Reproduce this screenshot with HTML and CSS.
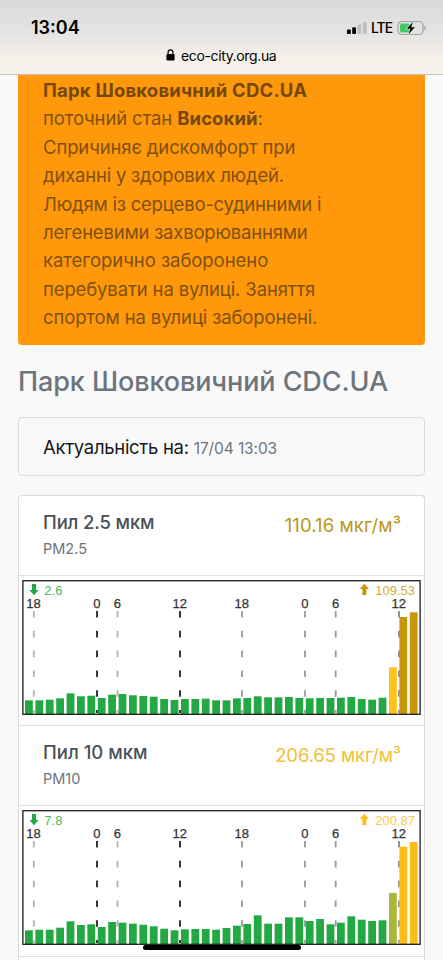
FILE: index.html
```html
<!DOCTYPE html>
<html lang="uk">
<head>
<meta charset="utf-8">
<title>Парк Шовковичний CDC.UA</title>
<link rel="stylesheet" href="styles.css">
</head>
<body>
<header class="browser-bar">
  <div class="status">
    <span class="clock">13:04</span>
    <div class="indicators">
      <svg class="signal" width="20" height="14" viewBox="0 0 20 14">
        <rect x="0" y="8.5" width="3.8" height="4.5" rx="1" fill="#000"/>
        <rect x="5.2" y="6.2" width="3.8" height="6.8" rx="1" fill="#000"/>
        <rect x="10.6" y="3.6" width="3.6" height="9.4" rx="1" fill="#bdbdbd"/>
        <rect x="16" y="1" width="3.6" height="12" rx="1" fill="#bdbdbd"/>
      </svg>
      <span class="network">LTE</span>
      <svg class="battery" width="30" height="16" viewBox="0 0 30 16">
        <rect x="1" y="1.5" width="25" height="13" rx="4" fill="none" stroke="#a2a2a2" stroke-width="1.2"/>
        <path d="M27.4 5.8q1.6.6 1.6 2.2t-1.6 2.2z" fill="#a2a2a2"/>
        <rect x="3" y="3.5" width="10" height="9" rx="2" fill="#3ecb63"/>
        <path d="M15.8 2 9.8 8.8h3.5L11.6 14.2 17.8 7.2h-3.6z" fill="#000" stroke="#dedede" stroke-width="1.6" paint-order="stroke"/>
      </svg>
    </div>
  </div>
  <div class="address">
    <svg width="9" height="12" viewBox="0 0 9 12">
      <rect x="0.4" y="5" width="8.2" height="6.6" rx="1" fill="#000"/>
      <path d="M2.1 5.5V3.3a2.4 2.4 0 0 1 4.8 0v2.2" fill="none" stroke="#000" stroke-width="1.2"/>
    </svg>
    <span>eco-city.org.ua</span>
  </div>
</header>
<main class="page">
  <section class="alert">
    <b class="place">Парк Шовковичний CDC.UA</b><br>
    <span>поточний стан <b>Високий</b>:</span><br>
    <span>Спричиняє дискомфорт при</span><br>
    <span class="tight">диханні у здорових людей.</span><br>
    <span class="tight">Людям із серцево-судинними і</span><br>
    <span class="tight">легеневими захворюваннями</span><br>
    <span class="loose">категорично заборонено</span><br>
    <span>перебувати на вулиці. Заняття</span><br>
    <span>спортом на вулиці заборонені.</span>
  </section>
  <h1 class="title">Парк Шовковичний CDC.UA</h1>
  <section class="updated">
    <span class="updated-label">Актуальність на:</span>
    <span class="updated-time">17/04 13:03</span>
  </section>
  <section class="readings">
    <div class="reading">
      <div>
        <div class="name">Пил 2.5 мкм</div>
        <div class="code">PM2.5</div>
      </div>
      <div class="value value-high">110.16 мкг/м³</div>
    </div>
    <div class="chart" id="pm25"></div>
    <div class="reading">
      <div>
        <div class="name name-pm10">Пил 10 мкм</div>
        <div class="code">PM10</div>
      </div>
      <div class="value value-mid">206.65 мкг/м³</div>
    </div>
    <div class="chart chart-second" id="pm10"></div>
  </section>
</main>
<div class="home-indicator"></div>
<script src="charts.js"></script>
</body>
</html>
```
FILE: styles.css
```css
* { box-sizing: border-box; }
body {
  margin: 0;
  background: #f9f9fa;
  font-family: Inter, "Liberation Sans", sans-serif;
  color: #212529;
}
.browser-bar {
  height: 75px;
  padding-top: 17px;
  background: linear-gradient(#d9dada, #e4e4e3 45%, #f7f1e9 80%, #f6f2ed);
  border-bottom: 1px solid #c9c3bc;
  color: #000;
}
.status {
  display: flex;
  justify-content: space-between;
  align-items: center;
  height: 21px;
  padding: 0 16px 0 31px;
}
.clock { font-size: 18px; font-weight: 600; letter-spacing: 0; }
.indicators { display: flex; align-items: center; }
.network { margin: 0 4px 0 4px; font-size: 14px; font-weight: 500; letter-spacing: -1.1px; padding-right: 1px; }
.address {
  display: flex;
  align-items: center;
  gap: 6px;
  height: 20px;
  margin: 7px 0 0 166px;
  font-size: 14px;
  letter-spacing: -0.36px;
}
.page { padding: 0 18px; }
.alert {
  height: 270px;
  padding: 1px 24px 0 25px;
  border-radius: 0 0 4px 4px;
  background: #ff980b;
  color: #80500d;
  font-size: 18.5px;
  line-height: 28.4px;
  letter-spacing: -0.13px;
  white-space: nowrap;
}
.alert b { font-weight: 700; color: #754807; letter-spacing: 0.1px; }
.alert .place { letter-spacing: 0.2px; }
.alert .tight { letter-spacing: -0.21px; }
.alert .loose { letter-spacing: -0.05px; }
.title {
  margin: 20px 0 0;
  font-size: 27px;
  line-height: 34px;
  font-weight: 500;
  letter-spacing: -0.09px;
  color: #6c757d;
  white-space: nowrap;
}
.updated {
  display: flex;
  align-items: center;
  gap: 5px;
  height: 59px;
  margin-top: 18px;
  padding: 1px 24px 0;
  border: 1px solid #d9dadb;
  border-radius: 4px;
}
.updated-label { font-size: 18.5px; letter-spacing: -0.3px; color: #17191b; }
.updated-time { font-size: 15.5px; letter-spacing: -0.1px; color: #6c757d; padding-top: 2px; }
.readings {
  height: 465px;
  margin-top: 19px;
  border: 1px solid #d9dadb;
  border-bottom: 0;
  border-radius: 4px 4px 0 0;
  background: #fff;
}
.reading {
  display: flex;
  justify-content: space-between;
  height: 80px;
  padding: 13px 23px 0 24px;
  border-bottom: 1px solid #dedfe0;
}
.name { font-size: 18.5px; line-height: 26px; font-weight: 500; letter-spacing: -0.15px; color: #495057; }
.name-pm10 { letter-spacing: 0; }
.code { margin-top: 3px; font-size: 14.5px; line-height: 22px; color: #6c757d; }
.value { padding-top: 3px; font-size: 18.5px; line-height: 26px; }
.value-high { color: #ba9618; letter-spacing: 0.1px; }
.value-mid { color: #f0c136; letter-spacing: -0.13px; }
.chart {
  height: 150px;
  padding: 4px 0 0 3px;
  border-bottom: 1px solid #dedfe0;
}
.chart-second { height: 151px; }
.chart svg { display: block; }
.chart text { font-family: "Liberation Sans", Arial, sans-serif; font-size: 13px; }
.home-indicator {
  position: absolute;
  left: 143px;
  top: 945px;
  width: 158px;
  height: 5px;
  border-radius: 3px;
  background: #000;
}
```
FILE: charts.js
```js
const GREEN = "#24a843";
const AMBER = "#ffc21a";
const BRONZE = "#c8960c";
const OLIVE = "#a9b83c";

const ticks = [
  [11.8, "18", "#b3b3b3"], [75, "0", "#222"], [95.5, "6", "#b3b3b3"], [158, "12", "#222"],
  [220, "18", "#999"], [283, "0", "#999"], [313.7, "6", "#999"], [377, "12", "#888"]
];

function drawChart(id, low, high, highColor, heights, colors) {
  let out = "";
  for (const [x, , color] of ticks) {
    out += `<line x1="${x}" x2="${x}" y1="31" y2="133" stroke="${color}" stroke-width="1.8" stroke-dasharray="6.6 13.2"/>`;
  }
  heights.forEach((h, i) => {
    const color = colors[i - 35] || GREEN;
    out += `<rect x="${(3 + i * 10.4).toFixed(1)}" y="${(134 - h).toFixed(1)}" width="7.8" height="${h}" fill="${color}"/>`;
  });
  for (const [x, label] of ticks) {
    out += `<text x="${x - 0.2}" y="28" text-anchor="middle" fill="#333" stroke="#333" stroke-width="0.25">${label}</text>`;
  }
  out += `<path d="M10 4h4v6h2.6L12 15.3 7.4 10H10z" fill="${GREEN}"/>`;
  out += `<text x="22.3" y="14.7" fill="#4bb765">${low}</text>`;
  out += `<path d="M340.4 15h4V9h2.6L342.4 3.7 337.8 9h2.6z" fill="${highColor}"/>`;
  out += `<text x="393" y="14.7" text-anchor="end" fill="${highColor}" opacity="0.8">${high}</text>`;
  out += `<rect x="0.9" y="0.7" width="397.2" height="133.6" fill="none" stroke="#1c1c1c" stroke-width="1.3"/>`;
  document.getElementById(id).innerHTML =
    `<svg width="399" height="135" viewBox="0 0 399 135">${out}</svg>`;
}

drawChart("pm25", "2.6", "109.53", BRONZE,
  [13.7, 13.7, 14.3, 15.7, 20.7, 17.7, 18.3, 16, 19.3, 20, 18.7, 18, 17.3, 15, 14, 15, 15, 15.3, 13.7,
   13.7, 15.7, 16, 17.7, 16.7, 16.7, 17, 16, 15.7, 16, 16, 16.3, 17, 15, 14.3, 16.3, 46.7, 97, 101.7],
  [AMBER, BRONZE, BRONZE]);

drawChart("pm10", "7.8", "200.87", "#fbbd1a",
  [13.7, 14.3, 14.3, 16.3, 22.7, 19, 19.7, 17, 22, 21.3, 20.3, 19.3, 17.7, 15.3, 13.7, 14.7, 15, 15, 14.3,
   16, 18.3, 20, 28.7, 20.3, 20.3, 26.7, 26.7, 23, 25, 19.7, 21.3, 27.7, 24.3, 23, 23.7, 51, 97.3, 102],
  [OLIVE, "#fbbd1a", "#fbbd1a"]);
```
